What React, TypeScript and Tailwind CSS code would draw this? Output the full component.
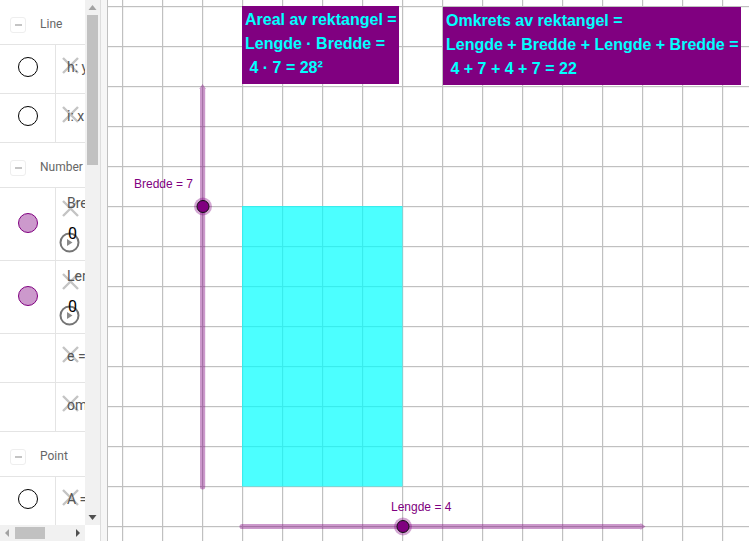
const xLines = [122, 162, 202, 242, 282, 322, 362, 402, 442, 482, 522, 562, 602, 642, 682, 722];
const yLines = [6, 46, 86, 126, 166, 206, 246, 286, 326, 366, 406, 446, 486, 526];

const SectionHeader = ({ title, h }: { title: string; h: string }) => (
  <div className={`flex items-center border-b border-[#e4e4e4] pl-[10px] pt-[5px] ${h}`}>
    <div className="flex h-[16px] w-[16px] items-center justify-center rounded-[3px] border border-[#eeeeee]">
      <div className="h-[2px] w-[7px] bg-[#c4c4c4]" />
    </div>
    <span className="mb-[2px] ml-[14px] text-[12px] text-[#666666]">{title}</span>
  </div>
);

const CrossIcon = () => (
  <svg className="absolute left-[6px] top-[12px]" width="17" height="17" viewBox="0 0 17 17">
    <path d="M1 1 L16 16 M16 1 L1 16" stroke="#c4c4c4" strokeWidth="2.4" fill="none" />
  </svg>
);

const PlayIcon = () => (
  <svg className="absolute left-[3px] top-[44px]" width="21" height="21" viewBox="0 0 21 21">
    <circle cx="10.5" cy="10.5" r="9" stroke="#757575" strokeWidth="2" fill="none" />
    <path d="M8 7 L13.5 10.5 L8 14 Z" fill="#8a8a8a" />
  </svg>
);

type RowProps = {
  h: string;
  marble?: 'empty' | 'filled';
  label: string;
  slider?: boolean;
};

const Row = ({ h, marble, label, slider }: RowProps) => (
  <div className={`flex border-b border-[#e4e4e4] ${h}`}>
    <div className={`flex w-[56px] shrink-0 justify-center border-r border-[#e4e4e4] pl-[1px] ${slider ? 'pt-[25px]' : 'pt-[12px]'}`}>
      {marble === 'empty' && <div className="h-[20px] w-[20px] rounded-full border border-black bg-white" />}
      {marble === 'filled' && <div className="h-[20px] w-[20px] rounded-full border border-[#800080] bg-[#cc99cc]" />}
    </div>
    <div className="relative min-w-0 flex-1 overflow-hidden">
      <CrossIcon />
      <span className={`absolute left-[11px] whitespace-nowrap text-[14px] text-[#555555] ${slider ? 'top-[5px]' : 'top-[12px]'}`}>{label}</span>
      {slider && <PlayIcon />}
      {slider && <span className="absolute left-[12px] top-[37px] text-[16px] leading-[18px] text-black">0</span>}
    </div>
  </div>
);

const InfoBox = ({ lines, className }: { lines: string[]; className: string }) => (
  <div className={`absolute bg-[#800080] pl-[3px] pt-[2px] text-[16px] font-bold leading-[24px] whitespace-pre text-[#00ffff] ${className}`}>
    {lines.map(l => (
      <div key={l}>{l}</div>
    ))}
  </div>
);

export default function App() {
  return (
    <div className="flex h-[541px] w-[751px] overflow-hidden bg-white font-['Liberation_Sans',Arial,sans-serif]">
      {/* algebra view */}
      <div className="flex w-[85px] shrink-0 flex-col font-['Roboto',sans-serif]">
        <div className="flex-1 overflow-hidden">
          <SectionHeader title="Line" h="h-[45px]" />
          <Row h="h-[49px]" marble="empty" label="h: y" />
          <Row h="h-[49px]" marble="empty" label="i: x" />
          <SectionHeader title="Number" h="h-[45px]" />
          <Row h="h-[73px]" marble="filled" label="Bredde" slider />
          <Row h="h-[73px]" marble="filled" label="Lengde" slider />
          <Row h="h-[49px]" label="e = 28" />
          <Row h="h-[49px]" label="omkrets" />
          <SectionHeader title="Point" h="h-[45px]" />
          <Row h="h-[49px]" marble="empty" label="A = (0, 0)" />
        </div>
        <div className="flex h-[16px] shrink-0 items-center bg-[#f1f1f1]">
          <svg width="85" height="16" viewBox="0 0 85 16">
            <path d="M9 4 L5 8 L9 12 Z" fill="#a3a3a3" />
            <rect x="15" y="2" width="30" height="12" fill="#c1c1c1" />
            <path d="M76 4 L80 8 L76 12 Z" fill="#505050" />
          </svg>
        </div>
      </div>

      {/* vertical scrollbar */}
      <div className="flex w-[15px] shrink-0 flex-col">
        <div className="h-[525px] bg-[#f1f1f1]">
          <svg width="15" height="525" viewBox="0 0 15 525">
            <path d="M7.5 5 L11.5 10 L3.5 10 Z" fill="#a3a3a3" />
            <rect x="2" y="15" width="11" height="150" fill="#c1c1c1" />
            <path d="M3.5 515 L11.5 515 L7.5 520 Z" fill="#505050" />
          </svg>
        </div>
      </div>

      {/* splitter */}
      <div className="w-[8px] shrink-0 border-x border-[#dddddd] border-r-[#c0c0c0] bg-[#f6f6f6]" />

      {/* graphics view */}
      <div className="relative w-[641px] shrink-0 overflow-hidden">
        <svg className="absolute inset-0" width="641" height="541" viewBox="108 0 641 541">
          {xLines.map(x => (
            <rect key={x} x={x} y={0} width={1.2} height={541} fill="#c0c0c0" />
          ))}
          {yLines.map(y => (
            <rect key={y} x={108} y={y} width={641} height={1.2} fill="#c0c0c0" />
          ))}

          <rect x={242} y={206} width={160.5} height={280.5} fill="#00ffff" fillOpacity={0.7} />

          {/* vertical slider */}
          <path d="M202.6 84 L206 89 L205.2 89 L205.2 487 Q205.2 489.5 202.6 489.5 Q200 489.5 200 487 L200 89 L199.2 89 Z" fill="#800080" fillOpacity={0.4} />
          <circle cx={203} cy={206.5} r={9} fill="#800080" fillOpacity={0.35} />
          <circle cx={203} cy={206.5} r={6} fill="#800080" stroke="#111111" strokeWidth={1} />

          {/* horizontal slider */}
          <path d="M645.5 526.5 L640.5 523 L640.5 523.9 L242 523.9 Q239.5 523.9 239.5 526.5 Q239.5 529.1 242 529.1 L640.5 529.1 L640.5 530 Z" fill="#800080" fillOpacity={0.4} />
          <circle cx={403} cy={526.5} r={9} fill="#800080" fillOpacity={0.35} />
          <circle cx={403} cy={526.5} r={6} fill="#800080" stroke="#111111" strokeWidth={1} />
        </svg>

        <InfoBox
          className="left-[134px] top-[6px] h-[78px] w-[157px]"
          lines={['Areal av rektangel =', 'Lengde · Bredde =', ' 4 · 7 = 28²']}
        />
        <InfoBox
          className="left-[335px] top-[7px] h-[78px] w-[298px]"
          lines={['Omkrets av rektangel =', 'Lengde + Bredde + Lengde + Bredde =', ' 4 + 7 + 4 + 7 = 22']}
        />

        <span className="absolute left-[26px] top-[177px] text-[12px] leading-[14px] text-[#800080]">Bredde = 7</span>
        <span className="absolute left-[283px] top-[500px] text-[12px] leading-[14px] text-[#800080]">Lengde = 4</span>
      </div>
    </div>
  );
}
